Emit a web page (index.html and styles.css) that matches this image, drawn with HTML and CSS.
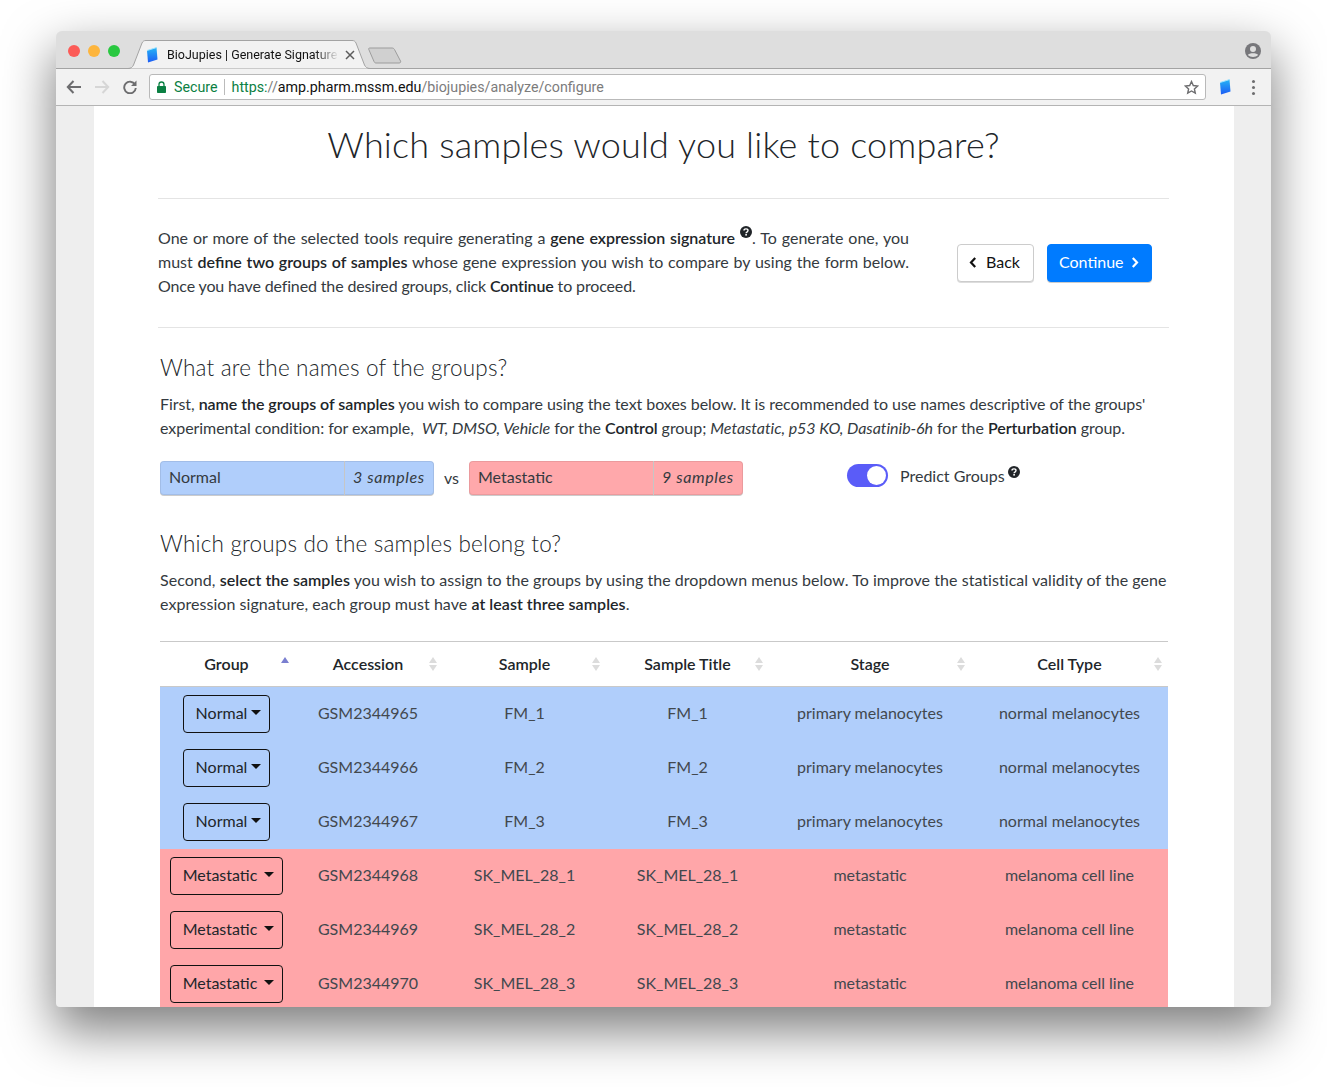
FILE: index.html
```html
<!DOCTYPE html>
<html lang="en">
<head>
<meta charset="utf-8">
<title>BioJupies | Generate Signature</title>
<link rel="stylesheet" href="styles.css">
</head>
<body>
<svg class="defs" width="0" height="0" aria-hidden="true">
  <defs>
    <linearGradient id="book" x1="0" y1="0" x2="0" y2="1"><stop offset="0" stop-color="#25b4f5"/><stop offset="1" stop-color="#1c5cf5"/></linearGradient>
    <symbol id="help" viewBox="0 0 12 12"><circle cx="6" cy="6" r="6" fill="#212529"/><path d="M4 4.6C4 3.5 4.9 2.9 6 2.9s2 .7 2 1.7c0 1.5-1.9 1.4-1.9 2.6" fill="none" stroke="#fff" stroke-width="1.4"/><rect x="5.3" y="8" width="1.6" height="1.6" fill="#fff"/></symbol>
    <symbol id="bookicon" viewBox="0 0 12 16"><path d="M1 3.5 10.5 .6 11.5 12.5 2 15.5Z" fill="url(#book)"/><path d="M1 3.5 10.5 .6" stroke="#9fe3ff" stroke-width="1"/></symbol>
    <symbol id="sort" viewBox="0 0 8 14"><path d="M4 0 8 6H0Z" fill="#dcdcdc"/><path d="M4 14 8 8H0Z" fill="#dcdcdc"/></symbol>
  </defs>
</svg>
<main class="window">
  <header class="tabbar">
    <div class="lights"><i class="light red"></i><i class="light yellow"></i><i class="light green"></i></div>
    <div class="tab">
      <svg class="tab-shape" width="242" height="29" viewBox="0 0 242 29"><path d="M0 28.500C3 28.500 4.500 27 5.500 25L14 3C15 1 16 .5 18 .5H224C226 .5 227 1 228 3L236.500 25C237.500 27 239 28.500 242 28.500" fill="#f2f2f2" stroke="#a3a3a3"/></svg>
      <svg class="tab-book" width="12" height="16"><use href="#bookicon"/></svg>
      <span class="tab-title">BioJupies | Generate Signature</span>
      <svg class="tab-close" width="10" height="10" viewBox="0 0 10 10"><path d="M1 1 9 9M9 1 1 9" stroke="#5c5c5c" stroke-width="1.5"/></svg>
    </div>
    <svg class="newtab" width="34" height="17" viewBox="0 0 34 17"><path d="M1.5 1H24C25 1 26 1.500 26.500 2.500L32.500 14C33 15 32.500 16 31 16H8C7 16 6.500 15.500 6 14.500L.8 2.500C.5 1.500 .8 1 1.500 1Z" fill="#d0d0d0" stroke="#9c9c9c"/></svg>
    <svg class="profile" width="16" height="16" viewBox="0 0 16 16"><circle cx="8" cy="8" r="8" fill="#77777b"/><circle cx="8" cy="6" r="3" fill="#dedede"/><path d="M2.800 12C4 9.800 12 9.800 13.200 12 10.500 14.500 5.500 14.500 2.800 12Z" fill="#dedede"/></svg>
  </header>
  <nav class="toolbar">
    <svg class="nav-icon nav-back" width="16" height="14" viewBox="0 0 16 14"><path d="M15 7H2M7.500 1 1.800 7l5.700 6" fill="none" stroke="#6d6d6f" stroke-width="2"/></svg>
    <svg class="nav-icon nav-fwd" width="16" height="14" viewBox="0 0 16 14"><path d="M1 7H14M8.500 1l5.700 6-5.700 6" fill="none" stroke="#d6d6d6" stroke-width="2"/></svg>
    <svg class="nav-icon nav-reload" width="14" height="14" viewBox="0 0 14 14"><path d="M12 4.500A5.800 5.800 0 1 0 12.800 8" fill="none" stroke="#6d6d6f" stroke-width="1.900"/><path d="M13.500 .5V6H8Z" fill="#6d6d6f"/></svg>
    <div class="omnibox">
      <svg class="lock" width="9" height="12" viewBox="0 0 9 12"><path d="M2 5V3.500a2.500 2.500 0 0 1 5 0V5" fill="none" stroke="#0b8043" stroke-width="1.300"/><rect y="5" width="9" height="7" rx=".8" fill="#0b8043"/></svg>
      <span class="secure">Secure</span>
      <span class="url"><span class="scheme">https:</span><span class="slashes">//</span><span class="host">amp.pharm.mssm.edu</span><span class="path">/biojupies/analyze/configure</span></span>
      <svg class="star" width="15" height="15" viewBox="0 0 15 15"><path d="M7.500 1.500 9.300 5.500 13.700 6 10.400 8.900 11.300 13.200 7.500 11 3.700 13.200 4.600 8.900 1.300 6 5.700 5.500Z" fill="none" stroke="#6d6d6f" stroke-width="1.400"/></svg>
    </div>
    <svg class="ext-book" width="12" height="16"><use href="#bookicon"/></svg>
    <div class="kebab"><i></i><i></i><i></i></div>
  </nav>
  <div class="viewport">
    <div class="page">
      <h1 class="title">Which samples would you like to compare?</h1>
      <hr class="rule">
      <section class="intro">
        <p class="intro-text">
          <span class="jline">One or more of the selected tools require generating a <b>gene expression signature</b> <svg class="help sup" width="12" height="12"><use href="#help"/></svg>. To generate one, you</span>
          <span class="jline">must <b>define two groups of samples</b> whose gene expression you wish to compare by using the form below.</span>
          <span class="line">Once you have defined the desired groups, click <b>Continue</b> to proceed.</span>
        </p>
        <div class="actions">
          <button class="btn btn-back" type="button"><svg width="8" height="11" viewBox="0 0 8 11"><path d="M6.200 1 2 5.500l4.200 4.500" fill="none" stroke="#111" stroke-width="2.200"/></svg>Back</button>
          <button class="btn btn-go" type="button">Continue<svg width="8" height="11" viewBox="0 0 8 11"><path d="M1.800 1 6 5.500 1.800 10" fill="none" stroke="#fff" stroke-width="2.200"/></svg></button>
        </div>
      </section>
      <hr class="rule rule-intro">
      <section class="block">
        <h2 class="subtitle">What are the names of the groups?</h2>
        <p class="copy copy-a">First, <b>name the groups of samples</b> you wish to compare using the text boxes below. It is recommended to use names descriptive of the groups'<br>experimental condition: for example, &nbsp;<em>WT, DMSO, Vehicle</em> for the <b>Control</b> group; <em>Metastatic, p53 KO, Dasatinib-6h</em> for the <b>Perturbation</b> group.</p>
        <div class="groups">
          <div class="group-input blue"><span class="group-name">Normal</span><span class="group-count">3 samples</span></div>
          <span class="vs">vs</span>
          <div class="group-input pink"><span class="group-name">Metastatic</span><span class="group-count">9 samples</span></div>
          <div class="predict">
            <span class="switch"><i class="knob"></i></span>
            <span class="predict-label">Predict Groups</span>
            <svg class="help predict-help" width="12" height="12"><use href="#help"/></svg>
          </div>
        </div>
      </section>
      <section class="block block-samples">
        <h2 class="subtitle">Which groups do the samples belong to?</h2>
        <p class="copy copy-b">Second, <b>select the samples</b> you wish to assign to the groups by using the dropdown menus below. To improve the statistical validity of the gene<br>expression signature, each group must have <b>at least three samples</b>.</p>
        <table class="samples">
          <colgroup><col class="c1"><col class="c2"><col class="c3"><col class="c4"><col class="c5"><col class="c6"></colgroup>
          <thead>
            <tr>
              <th>Group<svg class="sort-up" width="8" height="6" viewBox="0 0 8 6"><path d="M4 0 8 6H0Z" fill="#7a7fd0"/></svg></th>
              <th>Accession<svg class="sort" width="8" height="14"><use href="#sort"/></svg></th>
              <th>Sample<svg class="sort" width="8" height="14"><use href="#sort"/></svg></th>
              <th>Sample Title<svg class="sort" width="8" height="14"><use href="#sort"/></svg></th>
              <th>Stage<svg class="sort" width="8" height="14"><use href="#sort"/></svg></th>
              <th>Cell Type<svg class="sort" width="8" height="14"><use href="#sort"/></svg></th>
            </tr>
          </thead>
          <tbody>
            <tr class="row-blue"><td><button class="dd dd-n" type="button">Normal</button></td><td>GSM2344965</td><td>FM_1</td><td>FM_1</td><td>primary melanocytes</td><td>normal melanocytes</td></tr>
            <tr class="row-blue"><td><button class="dd dd-n" type="button">Normal</button></td><td>GSM2344966</td><td>FM_2</td><td>FM_2</td><td>primary melanocytes</td><td>normal melanocytes</td></tr>
            <tr class="row-blue"><td><button class="dd dd-n" type="button">Normal</button></td><td>GSM2344967</td><td>FM_3</td><td>FM_3</td><td>primary melanocytes</td><td>normal melanocytes</td></tr>
            <tr class="row-pink"><td><button class="dd dd-m" type="button">Metastatic</button></td><td>GSM2344968</td><td>SK_MEL_28_1</td><td>SK_MEL_28_1</td><td>metastatic</td><td>melanoma cell line</td></tr>
            <tr class="row-pink"><td><button class="dd dd-m" type="button">Metastatic</button></td><td>GSM2344969</td><td>SK_MEL_28_2</td><td>SK_MEL_28_2</td><td>metastatic</td><td>melanoma cell line</td></tr>
            <tr class="row-pink"><td><button class="dd dd-m" type="button">Metastatic</button></td><td>GSM2344970</td><td>SK_MEL_28_3</td><td>SK_MEL_28_3</td><td>metastatic</td><td>melanoma cell line</td></tr>
          </tbody>
        </table>
      </section>
    </div>
  </div>
</main>
</body>
</html>
```
FILE: styles.css
```css
* { box-sizing: border-box; }
html, body { margin: 0; height: 1087px; overflow: hidden; background: #fff; }
body { padding: 31px 56px 80px 56px; font-family: Lato, "Open Sans", sans-serif; color: #212529; }
.defs { position: absolute; }
.window { width: 1215px; height: 976px; border-radius: 6px 6px 4px 4px; overflow: clip; display: flex; flex-direction: column; background: #eee; box-shadow: 0 22px 50px 2px rgba(0,0,0,.5); }

.tabbar { position: relative; height: 38px; flex: none; background: #dedede; border-bottom: 1px solid #a3a3a3; display: flex; align-items: flex-end; padding-left: 12px; font-family: Roboto, "Liberation Sans", sans-serif; }
.lights { display: flex; gap: 8px; align-self: flex-start; margin-top: 14px; }
.light { width: 12px; height: 12px; border-radius: 50%; display: block; }
.red { background: #fc5b57; }
.yellow { background: #fdb53d; }
.green { background: #29c840; }
.tab { position: relative; width: 242px; height: 28px; margin-left: 8px; margin-bottom: -1px; display: flex; align-items: center; padding-left: 18px; color: #111; font-size: 12.5px; }
.tab-shape { position: absolute; left: 0; top: -1px; }
.tab-book, .tab-title, .tab-close { position: relative; }
.tab-title { width: 172px; margin-left: 9px; white-space: nowrap; overflow: hidden; padding-bottom: 1px; -webkit-mask-image: linear-gradient(90deg, #000 86%, transparent 100%); mask-image: linear-gradient(90deg, #000 86%, transparent 100%); }
.tab-close { margin-left: 6px; }
.newtab { margin-left: -2px; margin-bottom: 4px; }
.profile { position: absolute; right: 10px; top: 12px; }

.toolbar { height: 37px; flex: none; background: #f2f2f2; border-bottom: 1px solid #b4b4b4; display: flex; align-items: center; padding-left: 10px; font-family: Roboto, "Liberation Sans", sans-serif; }
.nav-icon { flex: none; }
.nav-back { margin-right: 12px; }
.nav-fwd { margin-right: 13px; }
.nav-reload { margin-right: 12px; }
.omnibox { width: 1057px; height: 26px; background: #fff; border: 1px solid #b9b9b9; border-radius: 3px; display: flex; align-items: center; padding: 0 6px; font-size: 14.25px; white-space: nowrap; }
.lock { margin: 0 8px 0 1px; flex: none; }
.secure { color: #0b8043; padding-right: 6px; border-right: 1px solid #bbb; line-height: 16px; }
.url { margin-left: 7px; flex: 1; }
.scheme { color: #0b8043; }
.slashes, .path { color: #7c7c7c; }
.host { color: #111; }
.star { flex: none; }
.ext-book { margin-left: 13px; flex: none; }
.kebab { margin-left: 21px; display: flex; flex-direction: column; gap: 3px; }
.kebab i { display: block; width: 3px; height: 3px; border-radius: 50%; background: #6d6d6f; }

.viewport { flex: 1; min-height: 0; padding: 0 37px 0 38px; overflow: hidden; }
.page { width: 1140px; height: 100%; background: #fff; padding: 0 65px 0 64px; overflow: hidden; }
.title { margin: 0; padding-top: 15px; height: 72px; text-align: center; font-size: 36px; line-height: 46px; font-weight: 300; white-space: nowrap; letter-spacing: .18px; }
.rule { border: 0; border-top: 1px solid #e4e4e4; margin: 20px 0 0; }
.rule-intro { margin-top: 0; }

.intro { display: flex; height: 128px; padding-top: 27px; }
.intro-text { margin: 0; width: 751px; font-size: 16px; line-height: 24px; color: #343a40; }
.jline { display: block; text-align: justify; text-align-last: justify; white-space: nowrap; }
.line { display: block; white-space: nowrap; letter-spacing: -.14px; }
b { font-weight: 600; color: #212529; }
.help { vertical-align: baseline; }
.sup { position: relative; top: -6px; }
.actions { margin-left: 48px; padding-top: 18px; display: flex; gap: 13px; align-items: flex-start; }
.btn { height: 38px; border-radius: 4px; font: 400 16px/1 Lato, sans-serif; display: flex; align-items: center; gap: 7px; padding: 0 11px 2px; }
.btn-back { width: 77px; gap: 9px; background: #fff; border: 1px solid #ccc; color: #111; box-shadow: 0 1px 0 #ddd; }
.btn-go { width: 105px; background: #007bff; border: 1px solid #007bff; color: #fff; box-shadow: 0 1px 0 #ccc; }

.block { padding-left: 2px; }
.subtitle { margin: 0; font-size: 22.5px; line-height: 28px; font-weight: 300; padding-top: 26px; height: 53px; letter-spacing: .18px; color: #212529; }
.copy { margin: 11px 0 0; font-size: 16px; line-height: 24px; white-space: nowrap; color: #343a40; }
.copy-a { letter-spacing: -.05px; }
.copy-b { letter-spacing: .05px; }
.groups { display: flex; align-items: center; margin-top: 20px; height: 36px; }
.group-input { display: flex; height: 34px; border-radius: 4px; font-size: 16px; box-shadow: inset 0 0 0 1px rgba(0,0,0,.08), 0 1px 0 #ccc; color: #343a40; }
.blue { width: 274px; background: #b0cefb; }
.pink { width: 274px; background: #ffa8ab; }
.group-name { flex: 1; padding: 0 8px 0 9px; line-height: 31px; }
.group-count { font-style: italic; width: 90px; padding-left: 8px; line-height: 31px; letter-spacing: .6px; border-left: 1px solid #c6c6c6; white-space: nowrap; }
.vs { width: 35px; padding-bottom: 2px; text-align: center; font-size: 16px; color: #343a40; }
.predict { display: flex; align-items: center; margin-left: 104px; padding-bottom: 6px; font-size: 16px; color: #343a40; }
.switch { width: 41px; height: 23px; border-radius: 12px; background: #5a5cf8; position: relative; display: block; }
.knob { position: absolute; right: 2px; top: 2px; width: 19px; height: 19px; border-radius: 50%; background: #fff; }
.predict-label { margin-left: 12px; }
.predict-help { margin: -6px 0 0 3px; }

.block-samples { padding-top: 8px; }
.samples { margin-top: 25px; width: 1008px; border-collapse: collapse; table-layout: fixed; font-size: 16px; text-align: center; color: #42484e; }
.c1 { width: 133px; } .c2 { width: 150px; } .c3 { width: 163px; } .c4 { width: 163px; } .c5 { width: 202px; } .c6 { width: 197px; }
.samples th { position: relative; height: 45px; padding: 0 0 2px; font-weight: 600; color: #212529; border-top: 1px solid #c9c9c9; border-bottom: 1px solid #c9c9c9; }
.sort { position: absolute; right: 6px; top: 15px; }
.sort-up { position: absolute; right: 4px; top: 15px; }
.samples td { height: 54px; padding: 0 0 2px; white-space: nowrap; }
.samples td:first-child { padding: 0; }
.row-blue { background: #b0cefb; }
.row-pink { background: #ffa6a9; }
.dd { height: 38px; background: transparent; border: 1px solid #111; border-radius: 4px; font: 400 16px/1 Lato, sans-serif; color: #212529; padding: 0 0 2px 4px; display: inline-flex; align-items: center; justify-content: center; vertical-align: middle; }
.dd-n { width: 87px; }
.dd-m { width: 113px; }
.dd::after { content: ""; width: 0; height: 0; margin-left: 4px; margin-top: -1px; border-top: 5px solid #111; border-left: 5px solid transparent; border-right: 5px solid transparent; }
.dd-m::after { margin-left: 7px; }
```
